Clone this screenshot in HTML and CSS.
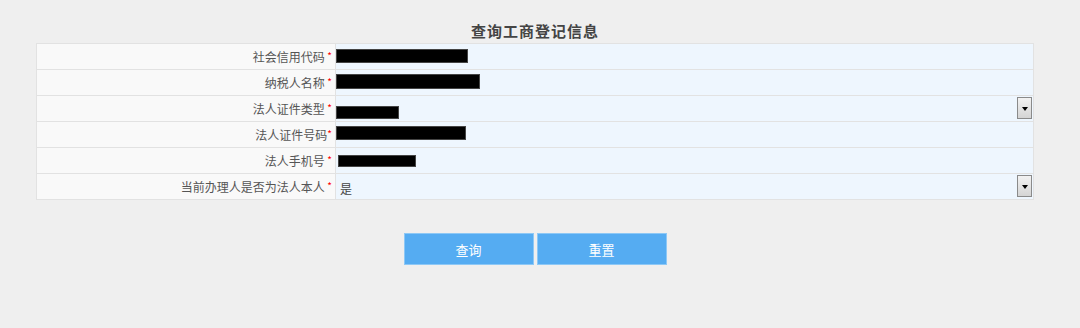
FILE: index.html
```html
<!DOCTYPE html>
<html lang="zh-CN">
<head>
    <meta charset="UTF-8">
    <title>查询工商登记信息</title>
    <link rel="stylesheet" href="styles.css">
</head>
<body>
    <div class="wrap">
        <h2 class="title">查询工商登记信息</h2>
        <table class="form-table">
            <tr>
                <td class="label">社会信用代码 <span class="req">*</span></td>
                <td class="field"><div class="mask mask-1"></div></td>
            </tr>
            <tr>
                <td class="label">纳税人名称 <span class="req">*</span></td>
                <td class="field"><div class="mask mask-2"></div></td>
            </tr>
            <tr>
                <td class="label">法人证件类型 <span class="req">*</span></td>
                <td class="field">
                    <div class="select">
                        <div class="select-value"><div class="mask mask-3"></div></div>
                        <span class="select-btn"><i></i></span>
                    </div>
                </td>
            </tr>
            <tr>
                <td class="label">法人证件号码<span class="req">*</span></td>
                <td class="field"><div class="mask mask-4"></div></td>
            </tr>
            <tr>
                <td class="label">法人手机号 <span class="req">*</span></td>
                <td class="field"><div class="mask mask-5"></div></td>
            </tr>
            <tr>
                <td class="label">当前办理人是否为法人本人 <span class="req">*</span></td>
                <td class="field">
                    <div class="select">
                        <div class="select-value"><span class="select-text">是</span></div>
                        <span class="select-btn"><i></i></span>
                    </div>
                </td>
            </tr>
        </table>
        <div class="actions">
            <button class="btn">查询</button>
            <button class="btn">重置</button>
        </div>
    </div>
</body>
</html>
```

FILE: styles.css
```css
* {
    margin: 0;
    padding: 0;
    box-sizing: border-box;
}

body {
    background-color: #efefef;
    font-family: "Noto Sans CJK SC", "Liberation Sans", sans-serif;
    font-size: 12px;
    color: #555;
}

.wrap {
    width: 998px;
    margin-left: 36px;
}

/* 标题 */
.title {
    padding-top: 21px;
    height: 43px;
    font-size: 15px;
    line-height: 20px;
    letter-spacing: 1px;
    font-weight: bold;
    color: #444;
    text-align: center;
}

/* 表单表格 */
.form-table {
    width: 998px;
    border-collapse: collapse;
    border: 1px solid #e2e2e2;
}

.form-table td {
    height: 26px;
    border: 1px solid #e2e2e2;
    padding: 0;
}

.label {
    width: 299px;
    background-color: #f9f9f9;
    text-align: right;
    padding-right: 3px !important;
    vertical-align: middle;
    line-height: 16px;
}

.req {
    color: #f00;
    font-size: 10px;
    vertical-align: 2px;
}

.field {
    background-color: #eef6fe;
    vertical-align: top;
}

/* 遮挡块 */
.mask {
    background-color: #000;
    border: 1px solid #444;
    height: 14px;
}

.mask-1 { width: 132px; margin-top: 5px; }
.mask-2 { width: 144px; margin-top: 4px; height: 15px; }
.mask-3 { width: 63px; margin-top: 10px; height: 13px; }
.mask-4 { width: 130px; margin-top: 4px; }
.mask-5 { width: 78px; margin-top: 7px; margin-left: 2px; height: 12px; }

/* 下拉框 */
.select {
    display: flex;
    justify-content: space-between;
    height: 25px;
}

.select-value {
    flex: 1;
}

.select-text {
    display: block;
    margin: 8px 0 0 4px;
    line-height: 14px;
    color: #444;
}

.select-btn {
    display: flex;
    align-items: center;
    justify-content: center;
    width: 15px;
    height: 22px;
    margin: 1px 1px 0 0;
    border: 1px solid #8a8a8a;
    background: linear-gradient(#f2f2f2, #d4d4d4);
}

.select-btn i {
    width: 0;
    height: 0;
    border-left: 3px solid transparent;
    border-right: 3px solid transparent;
    border-top: 4px solid #000;
    margin-top: 1px;
}

/* 按钮 */
.actions {
    display: flex;
    justify-content: center;
    gap: 3px;
    margin-top: 33px;
}

.btn {
    width: 130px;
    height: 32px;
    background-color: #55acf2;
    border: 1px solid #8dc8f6;
    color: #fff;
    font-family: "Noto Sans CJK SC", sans-serif;
    font-size: 13px;
    cursor: pointer;
}
```
